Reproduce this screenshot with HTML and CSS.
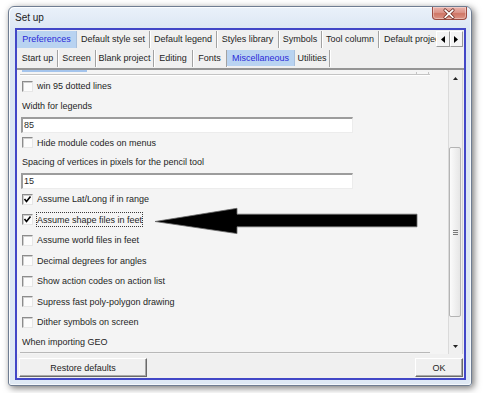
FILE: index.html
```html
<!DOCTYPE html>
<html lang="en">
<head>
<meta charset="utf-8">
<title>Set up</title>
<link rel="stylesheet" href="styles.css">
</head>
<body>
<div class="window">
  <div class="titlebar">
    <span class="title">Set up</span>
    <div class="close">
      <svg width="35" height="13" viewBox="0 0 35 13"><path d="M13.5 3 L21.5 10.5 M21.5 3 L13.5 10.5" stroke="#6b2b22" stroke-width="3.4" stroke-linecap="round"/><path d="M13.5 3 L21.5 10.5 M21.5 3 L13.5 10.5" stroke="#fff" stroke-width="1.8" stroke-linecap="round"/></svg>
    </div>
  </div>
  <div class="client">
    <div class="tabrow row1">
      <div class="tabs">
        <span class="tab sel">Preferences</span>
        <span class="tab">Default style set</span>
        <span class="tab">Default legend</span>
        <span class="tab">Styles library</span>
        <span class="tab">Symbols</span>
        <span class="tab">Tool column</span>
        <span class="tab">Default project</span>
      </div>
      <div class="spin">
        <span class="spin-btn"><svg width="4" height="7" viewBox="0 0 4 7"><path d="M4 0 L0 3.5 L4 7Z"/></svg></span>
        <span class="spin-btn"><svg width="4" height="7" viewBox="0 0 4 7"><path d="M0 0 L4 3.5 L0 7Z"/></svg></span>
      </div>
    </div>
    <div class="tabrow row2">
      <div class="tabs">
        <span class="tab">Start up</span>
        <span class="tab">Screen</span>
        <span class="tab">Blank project</span>
        <span class="tab">Editing</span>
        <span class="tab">Fonts</span>
        <span class="tab sel">Miscellaneous</span>
        <span class="tab">Utilities</span>
      </div>
    </div>
    <div class="panel">
      <div class="pane">
        <div class="stub">
          <div class="stub-sel"></div>
          <div class="stub-line"><span class="stub-notch"></span></div>
        </div>
        <div class="check-row"><span class="box"></span><span class="lbl">win 95 dotted lines</span></div>
        <div class="label">Width for legends</div>
        <div class="textbox">85</div>
        <div class="check-row"><span class="box"></span><span class="lbl">Hide module codes on menus</span></div>
        <div class="label">Spacing of vertices in pixels for the pencil tool</div>
        <div class="textbox">15</div>
        <div class="check-row"><span class="box checked"><svg width="9" height="9" viewBox="0 0 9 9"><path d="M1.5 4 L3.5 6.5 L7.5 1.5" fill="none" stroke="#000" stroke-width="1.6"/></svg></span><span class="lbl">Assume Lat/Long if in range</span></div>
        <div class="check-row"><span class="box checked"><svg width="9" height="9" viewBox="0 0 9 9"><path d="M1.5 4 L3.5 6.5 L7.5 1.5" fill="none" stroke="#000" stroke-width="1.6"/></svg></span><span class="lbl focus">Assume shape files in feet</span></div>
        <div class="check-row"><span class="box"></span><span class="lbl">Assume world files in feet</span></div>
        <div class="check-row"><span class="box"></span><span class="lbl">Decimal degrees for angles</span></div>
        <div class="check-row"><span class="box"></span><span class="lbl">Show action codes on action list</span></div>
        <div class="check-row"><span class="box"></span><span class="lbl">Supress fast poly-polygon drawing</span></div>
        <div class="check-row"><span class="box"></span><span class="lbl">Dither symbols on screen</span></div>
        <div class="label last">When importing GEO</div>
        <div class="combo"></div>
      </div>
      <div class="scrollbar">
        <div class="sb-btn"><svg width="5" height="3" viewBox="0 0 5 3"><path d="M0 3 L2.5 0 L5 3Z" fill="#222"/></svg></div>
        <div class="sb-track">
          <div class="thumb"><span class="grip"></span></div>
        </div>
        <div class="sb-btn"><svg width="5" height="3" viewBox="0 0 5 3"><path d="M0 0 L2.5 3 L5 0Z" fill="#222"/></svg></div>
      </div>
    </div>
    <div class="buttons">
      <button class="btn restore">Restore defaults</button>
      <button class="btn ok">OK</button>
    </div>
  </div>
</div>
<svg class="arrow" width="272" height="36" viewBox="0 0 272 36">
  <path d="M5 18.5 L87 5.3 L87 11.2 L267 11.2 L267 23.8 L87 23.8 L87 30.6 Z" fill="#000" stroke="#6a6a6a" stroke-width="0.8" stroke-linejoin="miter"/>
</svg>
</body>
</html>
```

FILE: styles.css
```css
* { box-sizing: border-box; }
html, body { margin: 0; padding: 0; }
body {
  width: 485px;
  height: 393px;
  overflow: hidden;
  background: #fff;
  padding: 6px 0 0 8px;
  font-family: "Liberation Sans", Arial, sans-serif;
  font-size: 9px;
  color: #1e1e1e;
}

.window {
  width: 464px;
  height: 380px;
  border: 1px solid #6f7d92;
  border-radius: 6px 6px 3px 3px;
  background: linear-gradient(#eaf1fa, #dbe6f3 24px, #dfe9f5);
  box-shadow: 2px 2px 7px rgba(0,0,0,.55), inset 1px 1px 0 #fbfdff, inset -1px -1px 0 #f4f8fc;
  padding: 0 5px 5px 6px;
  display: flex;
  flex-direction: column;
}

.titlebar {
  flex: none;
  height: 21px;
  display: flex;
  justify-content: space-between;
  align-items: flex-start;
}
.title {
  font-size: 10px;
  line-height: 21px;
  color: #1b1b1b;
}
.close {
  width: 35px;
  height: 13px;
  margin-right: -1px;
  border: 1px solid #9a4a40;
  border-top: none;
  border-radius: 0 0 4px 4px;
  background: linear-gradient(#eab3ab, #dc958a 45%, #cf7666 55%, #dc9486);
  box-shadow: inset 0 0 0 1px rgba(255,255,255,.35);
  display: flex;
}
.close svg { display: block; margin-left: -1px; }

.client {
  flex: 1;
  min-height: 0;
  border: 2px solid #4247c7;
  background: #f0f0f0;
  display: flex;
  flex-direction: column;
}

.tabrow { display: flex; flex: none; }
.tabs {
  flex: 1;
  min-width: 0;
  display: flex;
  overflow: hidden;
}
.tab {
  flex: none;
  height: 17px;
  margin-top: 1px;
  line-height: 17px;
  text-align: center;
  white-space: nowrap;
  border-right: 1px solid #a2a2a2;
  box-shadow: 1px 0 0 #fff;
  color: #1e1e1e;
}
.tab.sel {
  background: #b9d3f1;
  color: #2a2ad8;
  border-right-color: #a9c0dc;
  box-shadow: none;
}

.row1 { height: 19px; }
.row1 .tab:nth-child(1) { width: 60px; }
.row1 .tab:nth-child(2) { width: 73px; }
.row1 .tab:nth-child(3) { width: 67px; }
.row1 .tab:nth-child(4) { width: 62px; }
.row1 .tab:nth-child(5) { width: 43px; }
.row1 .tab:nth-child(6) { width: 57px; }
.row1 .tab:nth-child(7) { padding-left: 5px; border-right: none; }

.spin {
  flex: none;
  display: flex;
  height: 16px;
  margin: 1px 1px 0 0;
}
.spin-btn {
  width: 13.5px;
  height: 16px;
  display: flex;
  align-items: center;
  justify-content: center;
  background: #f4f4f4;
  border: 1px solid;
  border-color: #fff #9a9a9a #9a9a9a #fff;
}
.spin-btn svg { display: block; }

.row2 {
  height: 21px;
  padding-left: 1px;
  border-bottom: 2px solid #959595;
}
.row2 .tab:nth-child(1) { width: 40px; }
.row2 .tab:nth-child(2) { width: 38px; }
.row2 .tab:nth-child(3) { width: 58px; }
.row2 .tab:nth-child(4) { width: 39px; }
.row2 .tab:nth-child(5) { width: 34px; }
.row2 .tab:nth-child(6) { width: 68px; }
.row2 .tab:nth-child(7) { width: 35px; }
.row2 .tab.sel { height: 16px; line-height: 16px; }

.panel {
  flex: 0 0 284px;
  min-height: 0;
  overflow: hidden;
  display: flex;
  padding-right: 1px;
}
.pane {
  flex: 1;
  min-width: 0;
  overflow: hidden;
  background: #f4f4f4;
  display: flex;
  flex-direction: column;
}

.stub { flex: 0 0 6px; }
.stub-sel {
  width: 65px;
  height: 2px;
  margin-left: 5px;
  background: #a4c4ec;
}
.stub-line {
  position: relative;
  width: 410px;
  height: 2px;
  margin: 2px 0 0 3px;
  border-top: 1px solid #c4c4c4;
  border-bottom: 1px solid #fff;
}
.stub-notch {
  position: absolute;
  right: 1px;
  top: -3px;
  width: 13px;
  height: 3px;
  border: 1px solid #c4c4c4;
  border-top: none;
  background: #f6f6f6;
}

.check-row {
  flex: 0 0 20.5px;
  display: flex;
  align-items: center;
  padding-left: 5px;
}
.box {
  flex: none;
  width: 11px;
  height: 11px;
  margin-right: 4px;
  border: 1px solid;
  border-color: #8c8c8c #e6e6e6 #e6e6e6 #8c8c8c;
  background: #fcfcfc;
  box-shadow: inset 1px 1px 0 #cfcfcf;
  display: flex;
  align-items: center;
  justify-content: center;
}
.box svg { display: block; }
.lbl { white-space: nowrap; }
.lbl.focus {
  border: 1px dotted #3a3a3a;
  margin: 0 -1px;
  padding: 1.5px 0;
}

.label {
  flex: 0 0 18px;
  line-height: 18px;
  padding-left: 5px;
  white-space: nowrap;
}
.label.last { flex-basis: 18.5px; }

.textbox {
  flex: 0 0 16px;
  width: 332px;
  margin: 2px 0 0 4px;
  background: #fff;
  border-style: solid;
  border-width: 2px 1px 1px 2px;
  border-color: #9c9c9c #ececec #ececec #9c9c9c;
  padding-left: 1px;
  line-height: 12px;
  color: #2a2a2a;
}

.combo {
  flex: 0 0 20px;
  width: 410px;
  margin: 1px 0 0 3px;
  border-top: 1px solid #b8b8b8;
}

.scrollbar {
  flex: 0 0 15px;
  border-left: 1px solid #dadada;
  border-right: 1px solid #d2d2d2;
  background: #f0f0f0;
  display: flex;
  flex-direction: column;
}
.sb-btn {
  flex: 0 0 16px;
  display: flex;
  align-items: center;
  justify-content: center;
}
.sb-btn svg { display: block; }
.sb-track { flex: 1; min-height: 0; }
.thumb {
  width: 12px;
  height: 170px;
  margin: 61px 0 0 0;
  border: 1px solid #b4b4b4;
  border-radius: 2px;
  background: linear-gradient(to right, #fbfbfb, #e6e6e6);
  display: flex;
  align-items: center;
  justify-content: center;
}
.grip {
  width: 5px;
  height: 5px;
  background: repeating-linear-gradient(#7a7a7a 0 1px, transparent 1px 2px);
}

.buttons {
  flex: 1;
  min-height: 0;
  display: flex;
  justify-content: space-between;
  align-items: flex-start;
  padding: 4px 1px 0 2px;
}
.btn {
  height: 19px;
  padding: 0;
  font-family: inherit;
  font-size: 9px;
  color: #1e1e1e;
  background: #f0f0f0;
  border: 1px solid;
  border-color: #fff #6a6a6a #6a6a6a #fff;
  box-shadow: inset -1px -1px 0 #a8a8a8;
  border-radius: 0;
}
.restore { width: 128px; }
.ok { width: 48px; }

.arrow {
  position: absolute;
  left: 150px;
  top: 203px;
  display: block;
}
```
